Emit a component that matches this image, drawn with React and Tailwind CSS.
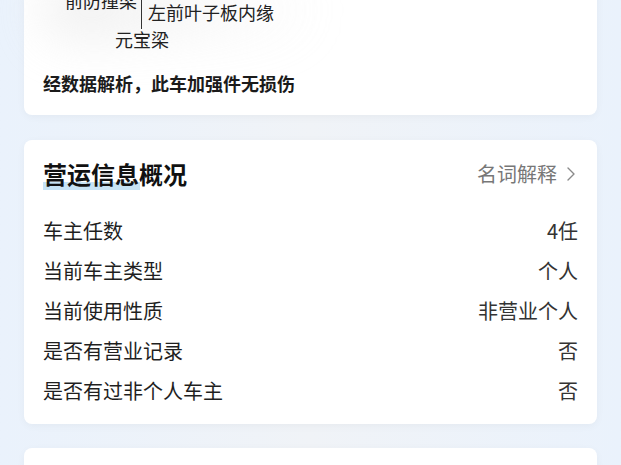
import React from 'react';

const rows = [
  { label: '车主任数', value: '4任' },
  { label: '当前车主类型', value: '个人' },
  { label: '当前使用性质', value: '非营业个人' },
  { label: '是否有营业记录', value: '否' },
  { label: '是否有过非个人车主', value: '否' },
];

function Chevron() {
  return (
    <svg width="10" height="16" viewBox="0 0 10 16" className="ml-[9px]">
      <polyline points="2,2 8,8 2,14" fill="none" stroke="#8a8a8a" strokeWidth="1.4" strokeLinecap="round" strokeLinejoin="round" />
    </svg>
  );
}

export default function App() {
  return (
    <div
      className="w-[621px] h-[465px] overflow-hidden bg-gradient-to-r from-[#eaf2fc] via-[#f0f3f7] to-[#eaf2fc]"
      style={{ fontFamily: '"Noto Sans CJK SC", "Noto Sans", sans-serif' }}
    >
      {/* damage diagram card (top cut off) */}
      <div className="mx-6 -mt-5 bg-white rounded-lg shadow-[0_2px_8px_rgba(0,0,0,0.04)] px-[19px] pb-[20px]">
        <div className="relative h-[70px] text-[18px] leading-[18px] text-[#222]">
          <div className="absolute left-0 top-0 w-[280px] h-[60px] rounded-full bg-gradient-to-r from-[#e4e4e4] to-transparent opacity-60 blur-xl" />
          <span className="absolute left-[22px] top-[11px]">前防撞梁</span>
          <span className="absolute left-[98px] top-0 w-px h-[49px] bg-[#333]" />
          <span className="absolute left-[105px] top-[23px]">左前叶子板内缘</span>
          <span className="absolute left-[72px] top-[50px]">元宝梁</span>
        </div>
        <p className="mt-[21px] text-[18px] leading-6 font-bold text-[#1a1a1a]">经数据解析，此车加强件无损伤</p>
      </div>

      {/* operation info */}
      <div className="mx-6 mt-[25px] bg-white rounded-lg shadow-[0_2px_8px_rgba(0,0,0,0.04)] px-[19px] pt-[20px] pb-[13px]">
        <div className="flex items-center justify-between h-7">
          <h2 className="relative text-[24px] leading-7 font-bold text-[#111]">
            <span className="absolute left-0 bottom-[-2px] w-[97px] h-[8px] bg-[#b9dcf2] opacity-80" />
            <span className="relative">营运信息概况</span>
          </h2>
          <div className="flex items-center text-[20px] leading-7 text-[#777] pr-[2px]">
            名词解释
            <Chevron />
          </div>
        </div>
        <div className="mt-[23px]">
          {rows.map((r) => (
            <div key={r.label} className="flex items-center justify-between h-10 text-[20px] leading-7">
              <span className="text-[#1f1f1f]">{r.label}</span>
              <span className="text-[#333]">{r.value}</span>
            </div>
          ))}
        </div>
      </div>

      <div className="mx-6 mt-6 h-[60px] bg-white rounded-lg shadow-[0_2px_8px_rgba(0,0,0,0.04)]" />
    </div>
  );
}
